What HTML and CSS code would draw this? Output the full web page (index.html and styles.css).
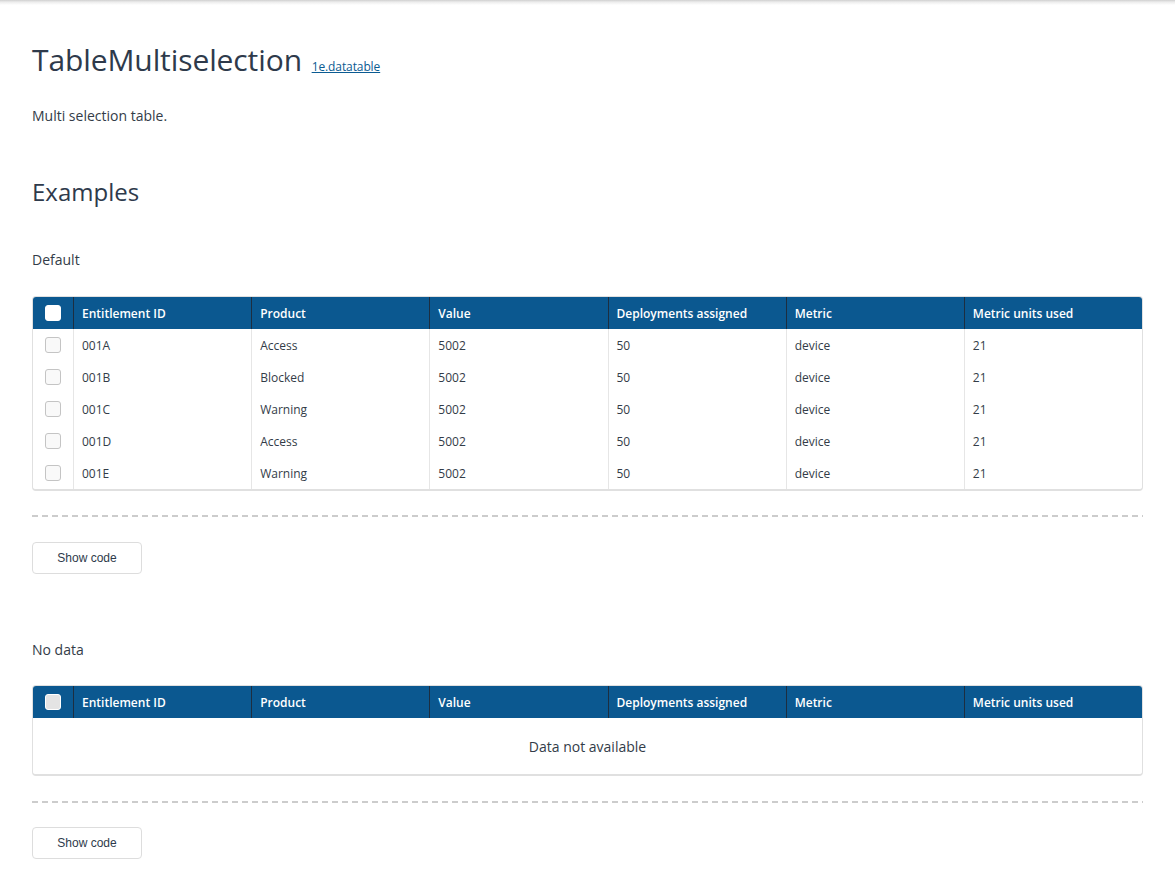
FILE: index.html
```html
<!DOCTYPE html>
<html>
<head>
<meta charset="utf-8">
<link rel="stylesheet" href="styles.css">
</head>
<body>
<div class="topshadow"></div>
<main class="page">
  <h1 class="title">TableMultiselection <a class="pkg" href="#">1e.datatable</a></h1>
  <p class="desc">Multi selection table.</p>
  <h2 class="section">Examples</h2>

  <section class="example">
    <h3 class="ex-title">Default</h3>
    <div class="table">
      <div class="row head">
        <div class="cell chk"><span class="box box-head"></span></div>
        <div class="cell">Entitlement ID</div>
        <div class="cell">Product</div>
        <div class="cell">Value</div>
        <div class="cell">Deployments assigned</div>
        <div class="cell">Metric</div>
        <div class="cell">Metric units used</div>
      </div>
      <div class="row">
        <div class="cell chk"><span class="box"></span></div>
        <div class="cell">001A</div><div class="cell">Access</div><div class="cell">5002</div><div class="cell">50</div><div class="cell">device</div><div class="cell">21</div>
      </div>
      <div class="row">
        <div class="cell chk"><span class="box"></span></div>
        <div class="cell">001B</div><div class="cell">Blocked</div><div class="cell">5002</div><div class="cell">50</div><div class="cell">device</div><div class="cell">21</div>
      </div>
      <div class="row">
        <div class="cell chk"><span class="box"></span></div>
        <div class="cell">001C</div><div class="cell">Warning</div><div class="cell">5002</div><div class="cell">50</div><div class="cell">device</div><div class="cell">21</div>
      </div>
      <div class="row">
        <div class="cell chk"><span class="box"></span></div>
        <div class="cell">001D</div><div class="cell">Access</div><div class="cell">5002</div><div class="cell">50</div><div class="cell">device</div><div class="cell">21</div>
      </div>
      <div class="row">
        <div class="cell chk"><span class="box"></span></div>
        <div class="cell">001E</div><div class="cell">Warning</div><div class="cell">5002</div><div class="cell">50</div><div class="cell">device</div><div class="cell">21</div>
      </div>
    </div>
    <div class="dash"></div>
    <button class="btn">Show code</button>
  </section>

  <section class="example second">
    <h3 class="ex-title">No data</h3>
    <div class="table">
      <div class="row head">
        <div class="cell chk"><span class="box box-disabled"></span></div>
        <div class="cell">Entitlement ID</div>
        <div class="cell">Product</div>
        <div class="cell">Value</div>
        <div class="cell">Deployments assigned</div>
        <div class="cell">Metric</div>
        <div class="cell">Metric units used</div>
      </div>
      <div class="empty">Data not available</div>
    </div>
    <div class="dash"></div>
    <button class="btn">Show code</button>
  </section>
</main>
</body>
</html>
```

FILE: styles.css
```css
html, body {
  margin: 0;
  padding: 0;
  background: #fff;
}
body {
  font-family: "Open Sans", "Noto Sans", sans-serif;
  color: #2e3a4b;
}
.topshadow {
  height: 5px;
  background: linear-gradient(to bottom, #cfcfcf 0%, #ececec 40%, #ffffff 100%);
}
.page {
  padding: 0 32px 40px 32px;
}
.title {
  margin: 35px 0 0 0;
  font-size: 30px;
  font-weight: 400;
  line-height: 40px;
  color: #2e3a4b;
  letter-spacing: -0.1px;
}
.pkg {
  font-size: 12px;
  color: #0b5b92;
  text-decoration: underline;
  vertical-align: baseline;
  margin-left: 2px;
}
.desc {
  margin: 19px 0 0 0;
  font-size: 14px;
  line-height: 20px;
  color: #333c48;
}
.section {
  margin: 50px 0 0 0;
  font-size: 24px;
  font-weight: 400;
  line-height: 32px;
  color: #2e3a4b;
}
.ex-title {
  margin: 42px 0 0 0;
  font-size: 14px;
  font-weight: 400;
  line-height: 20px;
  color: #333c48;
}
.second .ex-title {
  margin-top: 66px;
}
.table {
  margin-top: 26px;
  border: 1px solid #e0e0e0;
  border-bottom: 2px solid #e0e0e0;
  border-radius: 4px;
  overflow: hidden;
}
.second .table {
  margin-top: 25px;
}
.row {
  display: grid;
  grid-template-columns: 40px repeat(6, 1fr);
  height: 32px;
}
.cell {
  display: flex;
  align-items: center;
  padding-left: 8px;
  font-size: 12px;
  color: #333c48;
  border-left: 1px solid #e6e6e6;
  white-space: nowrap;
  overflow: hidden;
}
.cell.chk {
  border-left: none;
  padding-left: 12px;
}
.head {
  background: #0b5890;
}
.head .cell {
  color: #ffffff;
  font-weight: 600;
  font-size: 12px;
  border-left: 1px solid #1d2e40;
}
.head .cell.chk {
  border-left: none;
}
.box {
  display: inline-block;
  width: 14px;
  height: 14px;
  border: 1px solid #c4c4c4;
  border-radius: 3px;
  background: #f9f9f9;
}
.box-head {
  background: #ffffff;
  border-color: #ffffff;
}
.box-disabled {
  background: #e4e4e4;
  border-color: #ffffff;
}
.empty {
  height: 56px;
  display: flex;
  align-items: center;
  justify-content: center;
  font-size: 14px;
  color: #333c48;
}
.dash {
  margin-top: 24px;
  height: 2px;
  background: repeating-linear-gradient(to right, #cccccc 0, #cccccc 6px, transparent 6px, transparent 10px);
}
.second .dash {
  margin-top: 25px;
}
.btn {
  display: block;
  margin-top: 25px;
  width: 110px;
  height: 32px;
  border: 1px solid #dddddd;
  border-radius: 4px;
  background: #ffffff;
  font-family: "Liberation Sans", Arial, sans-serif;
  font-size: 12px;
  color: #2e3a4b;
  padding: 0;
}
.second .btn {
  margin-top: 24px;
}
```
